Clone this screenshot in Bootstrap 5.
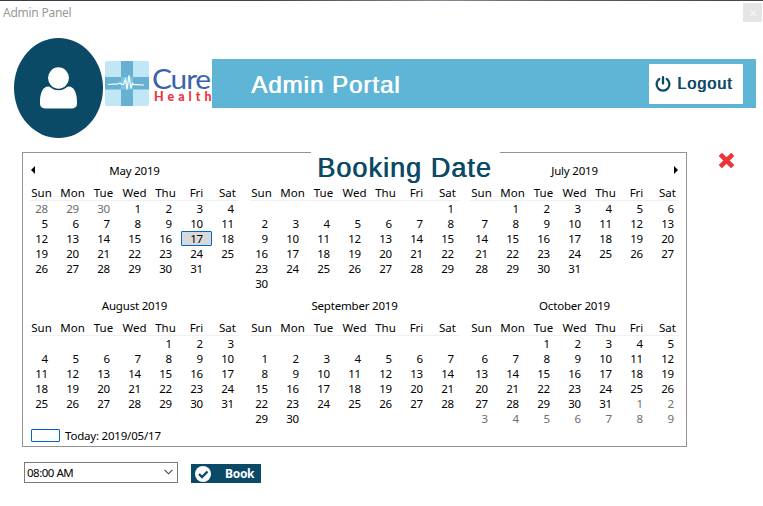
<!DOCTYPE html>
<html lang="en">
<head>
<meta charset="utf-8">
<meta name="viewport" content="width=device-width, initial-scale=1">
<title>Admin Panel</title>
<link href="https://cdn.jsdelivr.net/npm/bootstrap@5.3.0/dist/css/bootstrap.min.css" rel="stylesheet">
<style>
  :root { --navy: #0b4a66; --sky: #5eb5d5; --ui: "Noto Sans", "Open Sans", sans-serif; }
  body { height: 506px; overflow: hidden; background: linear-gradient(90deg, #3f3b45 0, #46424d 35%, #8d8698 58%, #5c5865 75%, #45414b) 0 0 / 100% 1px no-repeat #fff; padding-top: 1px; font: 11.5px/15px var(--ui); letter-spacing: -.2px; color: #000; }
  .titlebar { height: 37px; padding: 1px 1px 0 3px; color: #999; font-size: 12px; letter-spacing: -.25px; }
  .titlebar span { padding-top: 3px; line-height: 15px; }
  .close-btn { width: 19px; height: 19px; padding: 0; margin-top: 1px; border: 0; background: #e5e5e5; line-height: 0; }
  .gdi { font-family: "Liberation Sans", Arial, sans-serif; letter-spacing: 1px; text-shadow: .7px 0 currentColor; white-space: nowrap; }
  .top-row { height: 100px; padding: 0 7px 0 14px; }
  .brand-logo { width: 109px; }
  .banner { height: 49px; margin-top: 21px; padding: 0 13px 0 39px; background: var(--sky); }
  .banner h1 { font-size: 24px; line-height: 28px; padding-top: 3px; }
  .logout { width: 94px; height: 40px; padding: 0 0 0 6px; gap: 6px; background: #fff; color: var(--navy); border: 0; font-size: 16.2px; }
  .planner { padding: 14px 28px 0 22px; }
  .cal { width: 665px; height: 295px; border: 1px solid #949494; padding: 10px 3px 0; }
  .months { display: grid; grid-template-columns: repeat(3, 217px); column-gap: 3px; row-gap: 7px; }
  .month-name { height: 23px; position: relative; }
  .arrow { position: absolute; top: 3px; }
  .arrow.prev { left: 5px; } .arrow.next { right: 5px; }
  .days { display: grid; grid-template-columns: repeat(7, 31px); grid-auto-rows: 15px; text-align: right; height: 90px; }
  .days span { padding-right: 9px; }
  .days .off { color: #6d6d6d; }
  .days .now { background: #d9d9d9; border: 1px solid #0066cc; border-radius: 1px; padding-right: 8px; line-height: 13px; }
  .week { display: grid; grid-template-columns: repeat(7, 31px); height: 15px; line-height: 14px; letter-spacing: 0; text-align: center; background: linear-gradient(#f0f0f0, #f0f0f0) 4px 14px / 209px 1px no-repeat; }
  .today-line { padding: 2px 0 0 5px; gap: 5px; height: 17px; }
  .today-key { width: 29px; height: 13px; border: 1px solid #0066cc; border-radius: 1px; }
  .booking-title { position: absolute; left: 288px; top: -1px; width: 189px; height: 31px; padding-left: 6px; background: #fff; color: var(--navy); font-size: 27px; line-height: 33px; letter-spacing: 1.05px; }
  .dismiss { width: 17px; height: 17px; padding: 0; border: 0; background: none; line-height: 0; }
  .controls { padding: 15px 0 0 24px; gap: 13px; }
  .slot { width: 154px; height: 21px; padding: 0 4px 1px 2px; border: 1px solid #7a7a7a; letter-spacing: -.5px; }
  .book { width: 70px; height: 19px; margin-top: 2px; padding: 0 0 0 4px; gap: 14px; background: var(--navy); color: #fff; border: 0; font-size: 12px; font-weight: 700; letter-spacing: -.3px; }
</style>
</head>
<body>
<div class="titlebar d-flex justify-content-between align-items-start">
  <span>Admin Panel</span>
  <button class="close-btn d-flex align-items-center justify-content-center" aria-label="Close"><svg width="6" height="6" viewBox="0 0 6 6"><path d="M.5.5l5 5M5.500.5l-5 5" stroke="#f6f6f6" stroke-width="1.3"/></svg></button>
</div>
<header class="top-row d-flex align-items-start">
  <svg width="89" height="100" viewBox="0 0 89 100" class="flex-shrink-0">
    <ellipse cx="44.500" cy="50" rx="44.500" ry="50" fill="#0b4a66"/>
    <path d="M35 48.500C29 48 26 55 26 64v1.500q0 5 6 5h25q6 0 6-5V64c0-9-3-16-9-15.500q-9.500 7-19 0z" fill="#fff"/>
    <ellipse cx="44.500" cy="40" rx="11.200" ry="11.500" fill="#fff" stroke="#0b4a66" stroke-width="1.500"/>
  </svg>
  <svg class="brand-logo flex-shrink-0" height="100" viewBox="103 38 109 100">
    <rect x="105" y="61" width="44" height="45" rx="1.500" fill="#c1e7f7"/>
    <path d="M121 61h12v45h-12zM105 77h44v12.500h-44z" fill="#67b0d2"/>
    <path d="M121 77h12v12.500h-12z" fill="#74c7e6"/>
    <path d="M108 84.500l10-.7 2-.8 1.500 1.300h2l2-5 1.500 10 2-14 2 13 1.500-5 1.500 1.300h2l8 .4" fill="none" stroke="#fff" stroke-width="1.200"/>
    <text x="152" y="88.500" textLength="58" lengthAdjust="spacingAndGlyphs" font-family="Lato, sans-serif" font-size="27" letter-spacing="-1" fill="#3b62ab">Cure</text>
    <text x="154" y="101" textLength="57.500" font-family="Lato, sans-serif" font-weight="900" font-size="12.500" letter-spacing="0" fill="#ee3440">Health</text>
  </svg>
  <div class="banner flex-grow-1 d-flex align-items-center justify-content-between">
    <h1 class="gdi text-white fw-normal m-0">Admin Portal</h1>
    <button class="logout gdi d-flex align-items-center">
      <svg width="16" height="16" viewBox="0 0 16 16" fill="none" stroke="#0b4a66" stroke-width="2.300" stroke-linecap="round"><path d="M8 1.200v6.300M4.300 3A6.400 6.400 0 1 0 11.700 3"/></svg>Logout
    </button>
  </div>
</header>
<main class="planner d-flex justify-content-between align-items-start">
  <section class="cal position-relative">
    <div class="months" id="months"></div>
    <div class="today-line d-flex align-items-center"><span class="today-key"></span><span>Today: 2019/05/17</span></div>
    <div class="booking-title gdi" id="bookingTitle">Booking Date</div>
  </section>
  <button class="dismiss" aria-label="Close"><svg width="17" height="17" viewBox="0 0 17 17"><path d="M3 3l11 11M14 3L3 14" stroke="#ee3338" stroke-width="5.400" stroke-linecap="square" stroke-dasharray="none" stroke-linejoin="round" transform="translate(8.500 8.500) scale(.84) translate(-8.500 -8.500)"/></svg></button>
</main>
<div class="controls d-flex align-items-start">
  <div class="slot d-flex align-items-center justify-content-between"><span>08:00 AM</span><svg width="9" height="6" viewBox="0 0 9 6"><path d="M.5.800l4 4 4-4" fill="none" stroke="#444" stroke-width="1.100"/></svg></div>
  <button class="book d-flex align-items-center"><svg width="16" height="16" viewBox="0 0 16 16"><circle cx="8" cy="8" r="8" fill="#fff"/><path d="M4 8l3 3 5.500-5.500" fill="none" stroke="#0b4a66" stroke-width="2.400"/></svg>Book</button>
</div>
<script>
  // name, blank cells, leading days, days in month, trailing days
  const data = [
    ["May 2019", 0, [28, 29, 30], 31, []],
    ["June 2019", 6, [], 30, []],
    ["July 2019", 1, [], 31, []],
    ["August 2019", 4, [], 31, []],
    ["September 2019", 7, [], 30, []],
    ["October 2019", 2, [], 31, [1, 2, 3, 4, 5, 6, 7, 8, 9]]
  ];
  const arrows = {
    0: '<svg class="arrow prev" width="4" height="8" viewBox="0 0 4 8"><path d="M4 0v8L0 4z"/></svg>',
    2: '<svg class="arrow next" width="4" height="8" viewBox="0 0 4 8"><path d="M0 0v8l4-4z"/></svg>'
  };
  const week = ["Sun", "Mon", "Tue", "Wed", "Thu", "Fri", "Sat"].map(d => `<span>${d}</span>`).join("");
  document.getElementById("months").innerHTML = data.map(([name, blank, before, count, after], i) => {
    const off = d => `<span class="off">${d}</span>`;
    let cells = "<span></span>".repeat(blank) + before.map(off).join("");
    for (let d = 1; d <= count; d++) cells += `<span${i === 0 && d === 17 ? ' class="now"' : ""}>${d}</span>`;
    cells += after.map(off).join("");
    const title = i === 1 ? "" : name;
    return `<div><div class="month-name text-center">${arrows[i] || ""}${title}</div><div class="week">${week}</div><div class="days">${cells}</div></div>`;
  }).join("");
</script>
<script src="https://cdn.jsdelivr.net/npm/bootstrap@5.3.0/dist/js/bootstrap.bundle.min.js"></script>
</body>
</html>
